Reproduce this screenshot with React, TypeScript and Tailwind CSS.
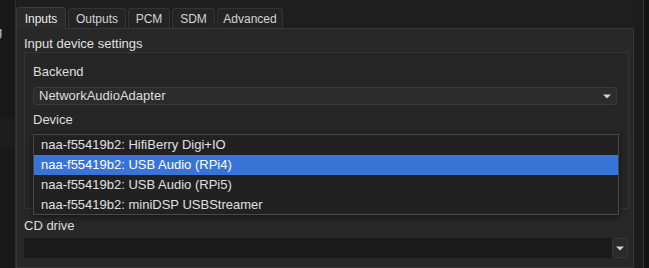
import React from "react";

const tabs = [
  { label: "Inputs", w: "w-[50px]" },
  { label: "Outputs", w: "w-[58px]" },
  { label: "PCM", w: "w-[42px]" },
  { label: "SDM", w: "w-[43px]" },
  { label: "Advanced", w: "w-[66px]" },
];

const devices = [
  "naa-f55419b2: HifiBerry Digi+IO",
  "naa-f55419b2: USB Audio (RPi4)",
  "naa-f55419b2: USB Audio (RPi5)",
  "naa-f55419b2: miniDSP USBStreamer",
];

function Arrow() {
  return (
    <svg width="8" height="5" viewBox="0 0 8 5" className="shrink-0">
      <path d="M0 0.5h8L4 4.5z" fill="#d0d0d0" />
    </svg>
  );
}

export default function App() {
  return (
    <div
      className="relative flex w-[649px] h-[268px] overflow-hidden bg-[#1e1e1e] text-[13px] text-[#dedede]"
      style={{ fontFamily: '"Liberation Sans", Arial, sans-serif' }}
    >
      {/* left sidebar remnant */}
      <div className="w-[16px] shrink-0 bg-[#181818] border-r border-[#2e2e2e] pt-[22px] text-[#bdbdbd] overflow-hidden">
        <span className="-ml-[5px]">g</span>
        <div className="mt-[76px] h-[30px] bg-[#1c1c1c]" />
      </div>

      <div className="flex flex-col w-[618px] shrink-0 pt-[7px]">
        {/* tab bar */}
        <div className="flex items-end h-[21px] gap-[2px] text-[12px]">
          {tabs.map((t, i) => (
            <div
              key={t.label}
              className={
                i === 0
                  ? `${t.w} h-[22px] flex items-center justify-center bg-[#2a2a2a] border border-b-0 border-[#3a3a3a] rounded-t-[3px] text-[#ececec] relative top-[1px]`
                  : `${t.w} h-[20px] flex items-center justify-center bg-[#242424] border border-b-0 border-[#343434] rounded-t-[3px] text-[#d4d4d4]`
              }
            >
              {t.label}
            </div>
          ))}
        </div>

        {/* panel */}
        <div className="flex-1 bg-[#282828] border border-[#363636] pl-[7px] pr-[4px] pt-[7px]">
          <div className="text-[#e0e0e0] leading-[15px]">Input device settings</div>
          <div className="mt-[1px] h-[157px] border border-[#333333] bg-[#262626] pl-[8px] pr-[11px] pt-[11px]">
            <div className="leading-[15px]">Backend</div>
            <div className="mt-[8px] h-[18px] flex items-center justify-between bg-[#2c2c2c] border border-[#3a3a3a] rounded-[3px] pl-[5px] pr-[5px]">
              <span>NetworkAudioAdapter</span>
              <Arrow />
            </div>
            <div className="mt-[7px] leading-[15px]">Device</div>
          </div>
          <div className="mt-[9px] leading-[15px]">CD drive</div>
          <div className="mt-[5px] h-[20px] flex items-stretch justify-end bg-[#1a1a1a] rounded-[2px] mr-[1px]">
            <div className="w-[16px] flex items-center justify-center bg-[#2a2a2a] border border-[#353535] rounded-[2px]">
              <Arrow />
            </div>
          </div>
        </div>
      </div>

      {/* right edge */}
      <div className="flex shrink-0">
        <div className="w-[9px] bg-[#1c1c1c]" />
        <div className="w-[1px] bg-[#363636]" />
        <div className="w-[5px] bg-[#131313]" />
      </div>

      {/* open combo popup */}
      <div className="absolute left-[33px] top-[134px] w-[586px] h-[81px] bg-[#212121] border border-[#4a4a4a] shadow-[0_2px_6px_rgba(0,0,0,0.5)]">
        {devices.map((d, i) => (
          <div
            key={d}
            className={
              i === 1
                ? "h-[20px] flex items-center pl-[7px] bg-[#3874d8] text-white"
                : "h-[20px] flex items-center pl-[7px] text-[#e0e0e0]"
            }
          >
            {d}
          </div>
        ))}
      </div>
    </div>
  );
}
